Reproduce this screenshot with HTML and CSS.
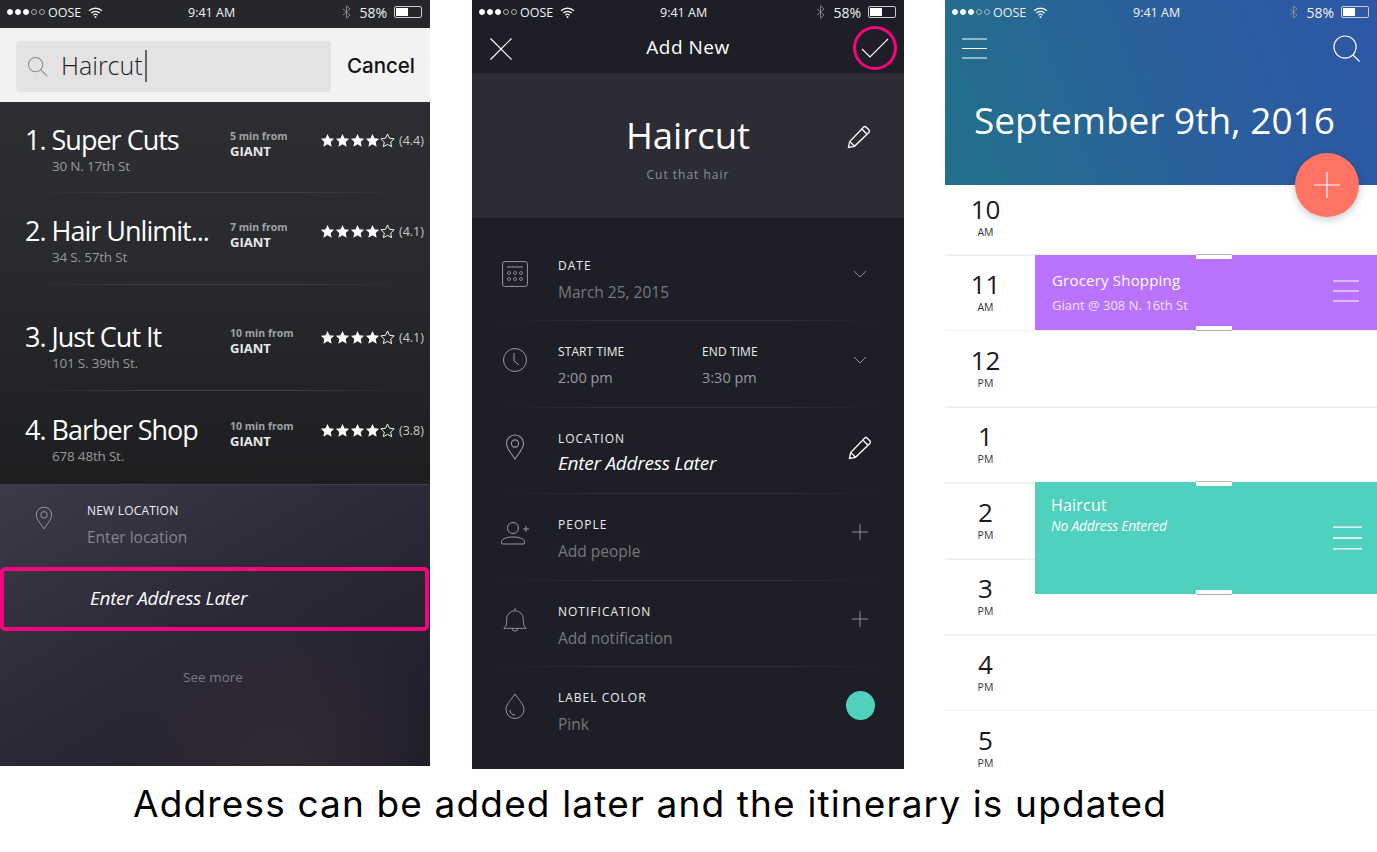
FILE: index.html
```html
<!DOCTYPE html>
<html>
<head>
    <meta charset="utf-8">
    <meta name="viewport" content="width=device-width">
    <title>Address Later</title>
    <link rel="stylesheet" href="styles.css">
</head>
<body>
    <!-- shared icons -->
    <svg class="sprite" xmlns="http://www.w3.org/2000/svg">
        <symbol id="i-star" viewBox="0 0 16 16"><path d="M8 1l2.1 4.6 5 .6-3.7 3.4 1 5L8 12.1 3.6 14.6l1-5L.9 6.2l5-.6z"/></symbol>
        <symbol id="i-wifi" viewBox="0 0 16 12"><path d="M1 4.2a10 10 0 0 1 14 0M3.4 6.6a6.6 6.6 0 0 1 9.2 0M5.700 8.900a3.300 3.300 0 0 1 4.600 0" fill="none" stroke="currentColor" stroke-width="1.5"/><circle cx="8" cy="10.8" r="1.1" fill="currentColor"/></symbol>
        <symbol id="i-bt" viewBox="0 0 10 16"><path d="M1 4.5l8 7-4 3.5V1l4 3.5-8 7" fill="none" stroke="currentColor" stroke-width="1"/></symbol>
        <symbol id="i-pin" viewBox="0 0 20 26"><path d="M10 25C6 19 1.5 14.5 1.5 9.500a8.500 8.500 0 0 1 17 0C18.500 14.500 14 19 10 25z" fill="none" stroke="currentColor" stroke-width="1.1"/><circle cx="10" cy="9.5" r="3.6" fill="none" stroke="currentColor" stroke-width="1.1"/></symbol>
        <symbol id="i-pencil" viewBox="0 0 24 24"><path d="M1.5 22.5l1.2-6L16.5 2.2a2 2 0 0 1 2.800 0l2.500 2.500a2 2 0 0 1 0 2.800L7.500 21.300zM2.700 16.500l4.800 4.800M14.800 4l5.200 5.200" fill="none" stroke="currentColor" stroke-width="1.3"/></symbol>
        <symbol id="i-chevron" viewBox="0 0 14 8"><path d="M1 1l6 6 6-6" fill="none" stroke="currentColor" stroke-width="1"/></symbol>
        <symbol id="i-plus" viewBox="0 0 16 16"><path d="M8 0v16M0 8h16" fill="none" stroke="currentColor" stroke-width="1"/></symbol>
        <symbol id="i-menu" viewBox="0 0 26 22" preserveAspectRatio="none"><path d="M0 1h26M0 11h26M0 21h26" fill="none" stroke="currentColor" stroke-width="1.2"/></symbol>
    </svg>

    <div class="screens">

        <!-- search results -->
        <section class="phone phone-search">
            <div class="status">
                <div class="status-left"><span class="dots"><i></i><i></i><i></i><i class="off"></i><i class="off"></i></span><span>OOSE</span><svg class="wifi"><use href="#i-wifi"/></svg></div>
                <div class="status-time">9:41 AM</div>
                <div class="status-right"><svg class="bt"><use href="#i-bt"/></svg><span>58%</span><span class="battery"><b></b></span></div>
            </div>
            <div class="search">
                <div class="search-box">
                    <svg class="search-icon" viewBox="0 0 22 22"><circle cx="9" cy="9" r="7.5" fill="none" stroke="#8d8d8d" stroke-width="1.1"/><path d="M14.5 14.5l6.5 6.5" stroke="#8d8d8d" stroke-width="1.1"/></svg>
                    <span class="search-text">Haircut</span><span class="caret"></span>
                </div>
                <span class="cancel">Cancel</span>
            </div>
            <div class="results">
                <div class="result">
                    <div><div class="result-name">1. Super Cuts</div><div class="result-addr">30 N. 17th St</div></div>
                    <div class="result-from"><span>5 min from</span><b>GIANT</b></div>
                    <div class="rating"><svg><use href="#i-star"/></svg><svg><use href="#i-star"/></svg><svg><use href="#i-star"/></svg><svg><use href="#i-star"/></svg><svg class="hollow"><use href="#i-star"/></svg><span>(4.4)</span></div>
                </div>
                <div class="result">
                    <div><div class="result-name">2. Hair Unlimit...</div><div class="result-addr">34 S. 57th St</div></div>
                    <div class="result-from"><span>7 min from</span><b>GIANT</b></div>
                    <div class="rating"><svg><use href="#i-star"/></svg><svg><use href="#i-star"/></svg><svg><use href="#i-star"/></svg><svg><use href="#i-star"/></svg><svg class="hollow"><use href="#i-star"/></svg><span>(4.1)</span></div>
                </div>
                <div class="result">
                    <div><div class="result-name">3. Just Cut It</div><div class="result-addr">101 S. 39th St.</div></div>
                    <div class="result-from"><span>10 min from</span><b>GIANT</b></div>
                    <div class="rating"><svg><use href="#i-star"/></svg><svg><use href="#i-star"/></svg><svg><use href="#i-star"/></svg><svg><use href="#i-star"/></svg><svg class="hollow"><use href="#i-star"/></svg><span>(4.1)</span></div>
                </div>
                <div class="result">
                    <div><div class="result-name">4. Barber Shop</div><div class="result-addr">678 48th St.</div></div>
                    <div class="result-from"><span>10 min from</span><b>GIANT</b></div>
                    <div class="rating"><svg><use href="#i-star"/></svg><svg><use href="#i-star"/></svg><svg><use href="#i-star"/></svg><svg><use href="#i-star"/></svg><svg class="hollow"><use href="#i-star"/></svg><span>(3.8)</span></div>
                </div>
            </div>
            <div class="location-panel">
                <div class="new-location">
                    <svg class="pin-small"><use href="#i-pin"/></svg>
                    <div>
                        <div class="field-label">NEW LOCATION</div>
                        <div class="field-value">Enter location</div>
                    </div>
                </div>
                <div class="later-box">Enter Address Later</div>
                <div class="see-more">See more</div>
            </div>
        </section>

        <!-- add new form -->
        <section class="phone phone-form">
            <div class="status">
                <div class="status-left"><span class="dots"><i></i><i></i><i></i><i class="off"></i><i class="off"></i></span><span>OOSE</span><svg class="wifi"><use href="#i-wifi"/></svg></div>
                <div class="status-time">9:41 AM</div>
                <div class="status-right"><svg class="bt"><use href="#i-bt"/></svg><span>58%</span><span class="battery"><b></b></span></div>
            </div>
            <div class="form-nav">
                <svg class="close-icon" viewBox="0 0 22 22"><path d="M.5.5l21 21M21.5.5l-21 21" fill="none" stroke="#fff" stroke-width="1.2"/></svg>
                <span class="form-title">Add New</span>
                <span class="check-ring"><svg viewBox="0 0 28 20"><path d="M1 11l8 8L27 1" fill="none" stroke="#fff" stroke-width="1.1"/></svg></span>
            </div>
            <div class="form-hero">
                <h1>Haircut</h1>
                <p>Cut that hair</p>
                <svg class="hero-pencil"><use href="#i-pencil"/></svg>
            </div>
            <div class="form-list">
                <div class="form-row">
                    <svg class="row-icon" viewBox="0 0 26 26"><rect x=".6" y=".6" width="24.8" height="24.8" rx="2" fill="none" stroke="currentColor" stroke-width="1"/><path d="M5 6h16" stroke="currentColor" stroke-width="1"/><g fill="none" stroke="currentColor" stroke-width=".8"><circle cx="7" cy="12" r="1.5"/><circle cx="13" cy="12" r="1.5"/><circle cx="19" cy="12" r="1.5"/><circle cx="7" cy="18" r="1.5"/><circle cx="13" cy="18" r="1.5"/><circle cx="19" cy="18" r="1.5"/></g></svg>
                    <div><div class="field-label">DATE</div><div class="field-value">March 25, 2015</div></div>
                    <svg class="row-chevron"><use href="#i-chevron"/></svg>
                </div>
                <div class="form-row">
                    <svg class="row-icon" viewBox="0 0 26 26"><circle cx="13" cy="13" r="11.5" fill="none" stroke="currentColor" stroke-width="1"/><path d="M12 6v8l5 4" fill="none" stroke="currentColor" stroke-width="1"/></svg>
                    <div class="time-pair">
                        <div><div class="field-label">START TIME</div><div class="field-value">2:00 pm</div></div>
                        <div><div class="field-label">END TIME</div><div class="field-value">3:30 pm</div></div>
                    </div>
                    <svg class="row-chevron"><use href="#i-chevron"/></svg>
                </div>
                <div class="form-row">
                    <svg class="row-icon"><use href="#i-pin"/></svg>
                    <div><div class="field-label">LOCATION</div><div class="field-later">Enter Address Later</div></div>
                    <svg class="row-pencil"><use href="#i-pencil"/></svg>
                </div>
                <div class="form-row">
                    <svg class="row-icon row-icon-wide" viewBox="0 0 30 24"><circle cx="13" cy="7" r="5.5" fill="none" stroke="currentColor" stroke-width="1"/><path d="M2 23c-2-3 1-7 11-7s13 4 11 7z" fill="none" stroke="currentColor" stroke-width="1"/><path d="M23 8h6M26 5v6" stroke="currentColor" stroke-width="1"/></svg>
                    <div><div class="field-label">PEOPLE</div><div class="field-value">Add people</div></div>
                    <svg class="row-plus"><use href="#i-plus"/></svg>
                </div>
                <div class="form-row">
                    <svg class="row-icon" viewBox="0 0 26 28"><path d="M1 23h24c-3-2-3-5-3-10a9 9 0 0 0-18 0c0 5 0 8-3 10zM13 1v3M10 23a3 3 0 0 0 6 0" fill="none" stroke="currentColor" stroke-width="1"/></svg>
                    <div><div class="field-label">NOTIFICATION</div><div class="field-value">Add notification</div></div>
                    <svg class="row-plus"><use href="#i-plus"/></svg>
                </div>
                <div class="form-row">
                    <svg class="row-icon" viewBox="0 0 20 26"><path d="M10 1C7 6 1 11 1 16.5a9 9 0 0 0 18 0C19 11 13 6 10 1z" fill="none" stroke="currentColor" stroke-width="1"/><path d="M5 17c0 3 2 5 5 5" fill="none" stroke="currentColor" stroke-width="1"/></svg>
                    <div><div class="field-label">LABEL COLOR</div><div class="field-value">Pink</div></div>
                    <span class="color-dot"></span>
                </div>
            </div>
        </section>

        <!-- day schedule -->
        <section class="phone phone-day">
            <header class="day-header">
                <div class="status">
                    <div class="status-left"><span class="dots"><i></i><i></i><i></i><i class="off"></i><i class="off"></i></span><span>OOSE</span><svg class="wifi"><use href="#i-wifi"/></svg></div>
                    <div class="status-time">9:41 AM</div>
                    <div class="status-right"><svg class="bt"><use href="#i-bt"/></svg><span>58%</span><span class="battery"><b></b></span></div>
                </div>
                <div class="day-nav">
                    <svg class="day-menu"><use href="#i-menu"/></svg>
                    <svg class="day-search" viewBox="0 0 28 28"><circle cx="12.5" cy="12.5" r="11.5" fill="none" stroke="#fff" stroke-width="1.2"/><path d="M20.5 20.5l7 7" stroke="#fff" stroke-width="1.2"/></svg>
                </div>
                <h2>September 9th, 2016</h2>
            </header>
            <div class="schedule">
                <div class="hour hour-first"><strong>10</strong><span>AM</span></div>
                <div class="hour"><strong>11</strong><span>AM</span></div>
                <div class="hour"><strong>12</strong><span>PM</span></div>
                <div class="hour"><strong>1</strong><span>PM</span></div>
                <div class="hour"><strong>2</strong><span>PM</span></div>
                <div class="hour"><strong>3</strong><span>PM</span></div>
                <div class="hour"><strong>4</strong><span>PM</span></div>
                <div class="hour hour-last"><strong>5</strong><span>PM</span></div>

                <div class="event event-grocery">
                    <div class="event-title">Grocery Shopping</div>
                    <div class="event-sub">Giant @ 308 N. 16th St</div>
                    <svg class="event-menu"><use href="#i-menu"/></svg>
                </div>
                <div class="event event-haircut">
                    <div class="event-title">Haircut</div>
                    <div class="event-later">No Address Entered</div>
                    <svg class="event-menu"><use href="#i-menu"/></svg>
                </div>
                <button class="fab" type="button"><svg viewBox="0 0 26 26"><path d="M13 0v26M0 13h26" stroke="#fff" stroke-width="1.2"/></svg></button>
            </div>
        </section>
    </div>

    <p class="caption">Address can be added later and the itinerary is updated</p>
</body>
</html>
```

FILE: styles.css
```css
* {
    box-sizing: border-box;
}

body {
    font-family: "Open Sans", Arial, sans-serif;
    background-color: #fff;
    margin: 0;
    padding: 0;
    overflow: hidden;
}

.sprite {
    display: none;
}

.screens {
    display: flex;
    align-items: flex-start;
    height: 770px;
}

.phone {
    flex: none;
    color: #fff;
}

/* status bar */
.status {
    display: grid;
    grid-template-columns: 181px auto 1fr;
    align-items: center;
    height: 24px;
    padding-left: 7px;
    padding-right: 8px;
    font-size: 12.5px;
    color: #f2f2f2;
}

.status-left,
.status-right {
    display: flex;
    align-items: center;
}

.status-right {
    justify-content: flex-end;
    font-size: 14px;
}

.dots {
    display: flex;
    gap: 2px;
    margin-right: 3px;
}

.dots i {
    width: 6px;
    height: 6px;
    border-radius: 50%;
    background-color: #fff;
    border: 1px solid #fff;
}

.dots i.off {
    background: none;
    border-color: #aaa;
}

.wifi {
    width: 15px;
    height: 11px;
    margin-left: 7px;
}

.bt {
    width: 9px;
    height: 14px;
    margin-right: 8px;
    color: #8d8f94;
}

.battery {
    display: block;
    width: 28px;
    height: 12px;
    margin-left: 7px;
    padding: 1px;
    border: 1px solid #ccc;
    border-radius: 2px;
}

.battery b {
    display: block;
    width: 12px;
    height: 8px;
    background-color: #fff;
}

/* phone 1 */
.phone-search {
    width: 430px;
    height: 766px;
    background-color: #25272a;
    margin-right: 42px;
}

.search {
    display: flex;
    align-items: center;
    height: 75px;
    margin-top: 4px;
    padding: 2px 15px 0 16px;
    background-color: #f2f2f2;
    border-bottom: 1px solid #2e3033;
    color: #111;
}

.search-box {
    display: flex;
    align-items: center;
    width: 315px;
    height: 51px;
    padding-left: 11px;
    background-color: #e3e3e3;
    border-radius: 4px;
}

.search-icon {
    width: 21px;
    height: 21px;
    margin-right: 13px;
}

.search-text {
    margin-top: -2px;
    font-size: 25px;
    font-weight: 300;
    color: #1c1c1c;
}

.caret {
    width: 2px;
    height: 32px;
    margin-left: 2px;
    background-color: #666;
}

.cancel {
    margin-left: auto;
    margin-top: -2px;
    font-family: Inter, sans-serif;
    font-size: 20.5px;
    font-weight: 500;
    color: #111;
}

.results {
    height: 381px;
    background: linear-gradient(180deg, #2c2e32 0%, #292a2d 40%, #1d1e20 100%);
}

.result {
    display: grid;
    grid-template-columns: 205px 90px 1fr;
    align-items: start;
    padding-left: 25px;
    position: relative;
}

.result::after {
    content: "";
    position: absolute;
    left: 25px;
    right: 20px;
    bottom: 0;
    height: 1px;
    background: linear-gradient(90deg, transparent, #3d3f42 30%, #3d3f42 70%, transparent);
}

.result:nth-child(1) { height: 90px; padding-top: 20px; }
.result:nth-child(2) { height: 92px; padding-top: 21px; }
.result:nth-child(3) { height: 106px; padding-top: 35px; }
.result:nth-child(4) { height: 93px; padding-top: 22px; }
.result:nth-child(4)::after { display: none; }

.result-name {
    font-size: 27px;
    line-height: 34px;
    letter-spacing: -1px;
    white-space: nowrap;
}

.result-addr {
    padding-left: 27px;
    font-size: 13.5px;
    line-height: 18px;
    letter-spacing: -0.2px;
    color: #97989a;
}

.result-from {
    display: flex;
    flex-direction: column;
    margin-top: 6px;
}

.result-from span {
    font-size: 10.5px;
    font-weight: 700;
    line-height: 15px;
    color: #a2a3a5;
}

.result-from b {
    font-size: 13px;
    line-height: 15px;
    color: #e8e8e8;
}

.rating {
    display: flex;
    align-items: center;
    height: 20px;
    margin-top: 7px;
    white-space: nowrap;
}

.rating svg {
    width: 15px;
    height: 15px;
    flex: none;
    fill: #fff;
}

.rating svg.hollow {
    fill: none;
    stroke: #fff;
    stroke-width: 1;
}

.rating span {
    margin-left: 4px;
    font-size: 12.5px;
    color: #c8c9ca;
}

.location-panel {
    height: 282px;
    padding-top: 18px;
    border-top: 1px solid #3f3e4a;
    background:
        radial-gradient(circle at 65% 100%, #322a33 0%, transparent 40%),
        linear-gradient(150deg, #3c3a48 0%, #2c2a38 45%, #1f1c2a 100%);
}

.new-location {
    display: grid;
    grid-template-columns: 87px 1fr;
    height: 64px;
}

.pin-small {
    width: 18px;
    height: 26px;
    margin: 2px 0 0 35px;
    color: #9b9aa3;
}

.field-label {
    font-size: 12px;
    line-height: 16px;
    letter-spacing: .2px;
    color: #ececec;
    white-space: nowrap;
}

.field-value {
    margin-top: 8px;
    font-size: 15.5px;
    line-height: 20px;
    color: #77777c;
}

.location-panel .field-value {
    color: #85848e;
}

.later-box {
    height: 64px;
    width: 429px;
    padding-left: 86px;
    border: 4px solid #f5047c;
    border-radius: 5px;
    font-size: 19px;
    font-style: italic;
    line-height: 54px;
    letter-spacing: -0.3px;
    white-space: nowrap;
}

.see-more {
    margin-top: 37px;
    text-align: center;
    font-size: 13.5px;
    line-height: 18px;
    color: #7b7a84;
    padding-right: 4px;
}

/* phone 2 */
.phone-form {
    width: 432px;
    height: 769px;
    background-color: #1e1f26;
    margin-right: 41px;
}

.form-nav {
    display: flex;
    align-items: center;
    justify-content: space-between;
    height: 49px;
    padding: 0 7px 0 18px;
    position: relative;
}

.close-icon {
    width: 22px;
    height: 22px;
}

.form-title {
    position: absolute;
    left: 0;
    right: 0;
    top: 10px;
    text-align: center;
    font-size: 19px;
    line-height: 26px;
    letter-spacing: .5px;
}

.check-ring {
    display: flex;
    align-items: center;
    justify-content: center;
    width: 44px;
    height: 44px;
    margin-top: -1px;
    border: 3px solid #f5047c;
    border-radius: 50%;
}

.check-ring svg {
    width: 28px;
    height: 20px;
}

.form-hero {
    position: relative;
    height: 145px;
    padding-top: 38px;
    background-color: #2b2c34;
    text-align: center;
}

.form-hero h1 {
    margin: 0;
    font-size: 36.5px;
    font-weight: 400;
    line-height: 48px;
}

.form-hero p {
    margin: 8px 0 0;
    font-size: 12px;
    letter-spacing: 1px;
    line-height: 16px;
    color: #8f9096;
}

.hero-pencil {
    position: absolute;
    right: 33px;
    top: 52px;
    width: 24px;
    height: 24px;
}

.form-list {
    padding-top: 16.5px;
}

.form-row {
    display: grid;
    grid-template-columns: 86px 1fr 59px;
    height: 86.5px;
    padding-top: 23px;
    position: relative;
}

.form-row .field-label {
    letter-spacing: 1px;
}

.form-row::after {
    content: "";
    position: absolute;
    left: 30px;
    right: 24px;
    bottom: 0;
    height: 1px;
    background: linear-gradient(90deg, transparent, #2f3037 25%, #2f3037 75%, transparent);
}

.form-row:last-child::after {
    display: none;
}

.row-icon {
    width: 26px;
    height: 26px;
    margin: 3px 0 0 30px;
    color: #98999d;
}

.row-icon-wide {
    width: 30px;
    margin-left: 28px;
}

.time-pair {
    display: grid;
    grid-template-columns: 144px 1fr;
}

.form-row .time-pair .field-label {
    letter-spacing: .1px;
}

.time-pair .field-value {
    font-size: 14.5px;
    color: #98999d;
}

.field-later {
    margin-top: 4px;
    font-size: 19px;
    font-style: italic;
    line-height: 24px;
    letter-spacing: -0.25px;
    white-space: nowrap;
}

.row-chevron {
    width: 14px;
    height: 8px;
    margin: 12px 0 0 8px;
    color: #8d8e93;
}

.row-pencil {
    width: 24px;
    height: 24px;
    margin: 5px 0 0 3px;
}

.row-plus {
    width: 16px;
    height: 16px;
    margin: 7px 0 0 7px;
    color: #8d8e93;
}

.color-dot {
    width: 29px;
    height: 29px;
    margin: 1px 0 0 1px;
    border-radius: 50%;
    background-color: #4fd1be;
}

/* phone 3 */
.phone-day {
    width: 432px;
    height: 770px;
    background-color: #fff;
}

.day-header {
    height: 185px;
    background: linear-gradient(70deg, #22718a 0%, #2a5f9c 55%, #2d57a6 100%);
}

.day-nav {
    display: flex;
    align-items: center;
    justify-content: space-between;
    height: 48px;
    padding: 0 17px;
}

.day-menu {
    width: 25px;
    height: 21px;
}

.day-search {
    width: 27px;
    height: 27px;
}

.day-header h2 {
    margin: 23px 0 0 29px;
    font-size: 37px;
    font-weight: 400;
    line-height: 50px;
    white-space: nowrap;
}

.schedule {
    position: relative;
    color: #1a1a1f;
}

.hour {
    display: flex;
    flex-direction: column;
    align-items: center;
    width: 81px;
    height: 76px;
    padding-top: 13px;
}

.schedule::before {
    content: "";
    position: absolute;
    inset: 69px 0 60px 0;
    background: repeating-linear-gradient(180deg, #f1f1f1 0, #f1f1f1 1.5px, transparent 1.5px, transparent 76px);
}

.hour-first {
    height: 70px;
    padding-top: 8px;
}

.hour-last {
    height: 60px;
}

.hour strong {
    font-size: 26px;
    font-weight: 400;
    line-height: 32px;
}

.hour span {
    font-size: 10.5px;
    line-height: 14px;
    color: #333;
}

.event {
    position: absolute;
    left: 90px;
    right: 0;
    padding-left: 17px;
    color: #fff;
}

.event::before,
.event::after {
    content: "";
    position: absolute;
    left: 161px;
    width: 36px;
    height: 4px;
    background-color: #fff;
}

.event::before {
    top: -1px;
    border-top: 1px solid #bbb;
}

.event::after {
    bottom: -1px;
    border-bottom: 1px solid #aaa;
}

.event-grocery {
    top: 70px;
    height: 75px;
    padding-top: 14px;
    background-color: #b973ff;
}

.event-haircut {
    top: 297px;
    height: 112px;
    padding-top: 12px;
    padding-left: 16px;
    background-color: #4fd1be;
}

.event-title {
    font-size: 15px;
    line-height: 22px;
    letter-spacing: .2px;
}

.event-haircut .event-title {
    font-size: 16px;
}

.event-sub {
    margin-top: 5px;
    font-size: 13px;
    line-height: 18px;
    color: #f0e4ff;
}

.event-later {
    font-size: 13.8px;
    font-style: italic;
    line-height: 20px;
    letter-spacing: -0.2px;
}

.event-menu {
    position: absolute;
    right: 18px;
    top: 25px;
    width: 26px;
    height: 22px;
}

.event-haircut .event-menu {
    top: 44px;
    height: 24px;
    right: 15px;
    width: 29px;
}

.fab {
    position: absolute;
    left: 350px;
    top: -32px;
    width: 64px;
    height: 64px;
    padding: 0;
    border: none;
    border-radius: 50%;
    background-color: #ff7365;
    box-shadow: 0 3px 8px rgba(0, 0, 0, 0.2);
    display: flex;
    align-items: center;
    justify-content: center;
}

.fab svg {
    width: 26px;
    height: 26px;
}

/* caption */
.caption {
    margin: 14px 0 0;
    padding-left: 133px;
    font-family: Inter, sans-serif;
    font-size: 37px;
    line-height: 40px;
    letter-spacing: 1.15px;
    color: #000;
    white-space: nowrap;
}
```
